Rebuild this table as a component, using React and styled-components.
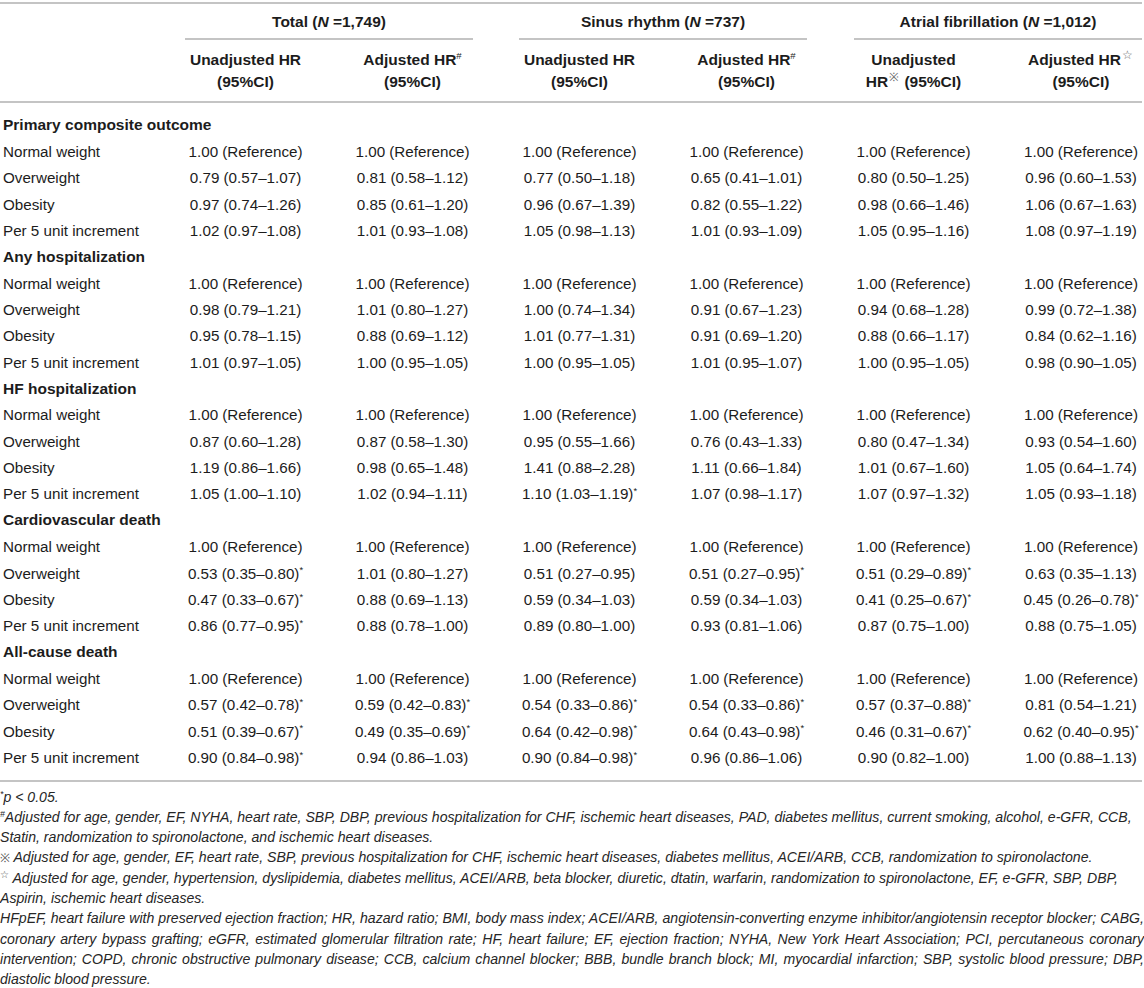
import React from 'react';
import styled, { createGlobalStyle } from 'styled-components';

const GlobalStyle = createGlobalStyle`
  body {
    margin: 0;
    background: #ffffff;
    color: #1c1c1c;
    font-family: "Liberation Sans", Arial, sans-serif;
  }
`;

const RULE = '#c4c4c4';
const COLS = '162px repeat(5, 167px) 145px';

const Page = styled.div`
  width: 1144px;
  height: 988px;
  overflow: hidden;
  padding-top: 2px;
  box-sizing: border-box;
`;

const Table = styled.div`
  width: 1142px;
  border-top: 2px solid ${RULE};
  border-bottom: 2px solid ${RULE};
  font-size: 15.2px;
`;

const Row = styled.div`
  display: grid;
  grid-template-columns: ${COLS};
  align-items: center;
`;

const GroupRow = styled(Row)`
  height: 36px;
  align-items: stretch;
`;

const GroupCell = styled.div`
  grid-column: ${({ $start }) => `${$start} / span 2`};
  display: flex;
  padding: ${({ $last }) => ($last ? '0 0 0 24px' : '0 23px')};
`;

const GroupLabel = styled.div`
  flex: 1;
  display: flex;
  align-items: center;
  justify-content: center;
  font-weight: bold;
  font-size: 15.5px;
  border-bottom: 2px solid ${RULE};
  padding-top: 1px;
  white-space: pre;
`;

const SubRow = styled(Row)`
  height: 61px;
  border-bottom: 2px solid ${RULE};
`;

const SubHead = styled.div`
  text-align: center;
  font-weight: bold;
  font-size: 15.5px;
  line-height: 22px;
  white-space: nowrap;
  padding-left: ${({ $edge }) => ($edge ? '23px' : '0')};
`;

const Body = styled.div`
  padding: 9px 0 9px;
`;

const BodyRow = styled(Row)`
  height: 26.35px;
`;

const SectionLabel = styled.div`
  grid-column: 1 / -1;
  padding-left: 3px;
  font-weight: bold;
  font-size: 15.5px;
`;

const RowLabel = styled.div`
  padding-left: 3px;
  white-space: nowrap;
`;

const Value = styled.div`
  text-align: center;
  white-space: nowrap;
  padding-left: ${({ $edge }) => ($edge ? '23px' : '0')};
`;

const Sup = styled.span`
  font-size: 0.62em;
  font-weight: normal;
  line-height: 0;
  position: relative;
  top: -0.55em;
`;

const Symbol = styled.span`
  font-size: 0.75em;
  font-weight: normal;
  line-height: 0;
  color: #6a6a6a;
  margin: 0 1px;
  position: relative;
  top: -0.45em;
`;

const Notes = styled.div`
  margin-top: 5px;
  font-size: 14.1px;
  line-height: 20.3px;
  font-style: italic;
  color: #262626;
`;

const Note = styled.p`
  margin: 0;
  text-align: ${({ $justify }) => ($justify ? 'justify' : 'left')};
  word-spacing: ${({ $justify }) => ($justify ? '-0.6px' : '0')};
`;

const Mark = styled.span`
  font-style: normal;
  font-size: ${({ $raise }) => ($raise ? '0.7em' : '0.85em')};
  line-height: 0;
  color: #555;
  position: relative;
  top: ${({ $raise }) => ($raise ? '-0.5em' : '0')};
`;

const REF = '1.00 (Reference)';

const sections = [
  {
    title: 'Primary composite outcome',
    rows: [
      ['Overweight', ['0.79 (0.57–1.07)', '0.81 (0.58–1.12)', '0.77 (0.50–1.18)', '0.65 (0.41–1.01)', '0.80 (0.50–1.25)', '0.96 (0.60–1.53)']],
      ['Obesity', ['0.97 (0.74–1.26)', '0.85 (0.61–1.20)', '0.96 (0.67–1.39)', '0.82 (0.55–1.22)', '0.98 (0.66–1.46)', '1.06 (0.67–1.63)']],
      ['Per 5 unit increment', ['1.02 (0.97–1.08)', '1.01 (0.93–1.08)', '1.05 (0.98–1.13)', '1.01 (0.93–1.09)', '1.05 (0.95–1.16)', '1.08 (0.97–1.19)']],
    ],
  },
  {
    title: 'Any hospitalization',
    rows: [
      ['Overweight', ['0.98 (0.79–1.21)', '1.01 (0.80–1.27)', '1.00 (0.74–1.34)', '0.91 (0.67–1.23)', '0.94 (0.68–1.28)', '0.99 (0.72–1.38)']],
      ['Obesity', ['0.95 (0.78–1.15)', '0.88 (0.69–1.12)', '1.01 (0.77–1.31)', '0.91 (0.69–1.20)', '0.88 (0.66–1.17)', '0.84 (0.62–1.16)']],
      ['Per 5 unit increment', ['1.01 (0.97–1.05)', '1.00 (0.95–1.05)', '1.00 (0.95–1.05)', '1.01 (0.95–1.07)', '1.00 (0.95–1.05)', '0.98 (0.90–1.05)']],
    ],
  },
  {
    title: 'HF hospitalization',
    rows: [
      ['Overweight', ['0.87 (0.60–1.28)', '0.87 (0.58–1.30)', '0.95 (0.55–1.66)', '0.76 (0.43–1.33)', '0.80 (0.47–1.34)', '0.93 (0.54–1.60)']],
      ['Obesity', ['1.19 (0.86–1.66)', '0.98 (0.65–1.48)', '1.41 (0.88–2.28)', '1.11 (0.66–1.84)', '1.01 (0.67–1.60)', '1.05 (0.64–1.74)']],
      ['Per 5 unit increment', ['1.05 (1.00–1.10)', '1.02 (0.94–1.11)', '1.10 (1.03–1.19)*', '1.07 (0.98–1.17)', '1.07 (0.97–1.32)', '1.05 (0.93–1.18)']],
    ],
  },
  {
    title: 'Cardiovascular death',
    rows: [
      ['Overweight', ['0.53 (0.35–0.80)*', '1.01 (0.80–1.27)', '0.51 (0.27–0.95)', '0.51 (0.27–0.95)*', '0.51 (0.29–0.89)*', '0.63 (0.35–1.13)']],
      ['Obesity', ['0.47 (0.33–0.67)*', '0.88 (0.69–1.13)', '0.59 (0.34–1.03)', '0.59 (0.34–1.03)', '0.41 (0.25–0.67)*', '0.45 (0.26–0.78)*']],
      ['Per 5 unit increment', ['0.86 (0.77–0.95)*', '0.88 (0.78–1.00)', '0.89 (0.80–1.00)', '0.93 (0.81–1.06)', '0.87 (0.75–1.00)', '0.88 (0.75–1.05)']],
    ],
  },
  {
    title: 'All-cause death',
    rows: [
      ['Overweight', ['0.57 (0.42–0.78)*', '0.59 (0.42–0.83)*', '0.54 (0.33–0.86)*', '0.54 (0.33–0.86)*', '0.57 (0.37–0.88)*', '0.81 (0.54–1.21)']],
      ['Obesity', ['0.51 (0.39–0.67)*', '0.49 (0.35–0.69)*', '0.64 (0.42–0.98)*', '0.64 (0.43–0.98)*', '0.46 (0.31–0.67)*', '0.62 (0.40–0.95)*']],
      ['Per 5 unit increment', ['0.90 (0.84–0.98)*', '0.94 (0.86–1.03)', '0.90 (0.84–0.98)*', '0.96 (0.86–1.06)', '0.90 (0.82–1.00)', '1.00 (0.88–1.13)']],
    ],
  },
];

function Cell({ text, edge }) {
  const starred = text.endsWith('*');
  return (
    <Value $edge={edge}>
      {starred ? text.slice(0, -1) : text}
      {starred && <Sup>*</Sup>}
    </Value>
  );
}

function DataRow({ label, values }) {
  return (
    <BodyRow>
      <RowLabel>{label}</RowLabel>
      {values.map((v, i) => (
        <Cell key={i} text={v} edge={i === 5} />
      ))}
    </BodyRow>
  );
}

export default function App() {
  return (
    <Page>
      <GlobalStyle />
      <Table>
        <GroupRow>
          <GroupCell $start={2}>
            <GroupLabel>Total (<i>N</i> =1,749)</GroupLabel>
          </GroupCell>
          <GroupCell $start={4}>
            <GroupLabel>Sinus rhythm (<i>N</i> =737)</GroupLabel>
          </GroupCell>
          <GroupCell $start={6} $last>
            <GroupLabel>Atrial fibrillation (<i>N</i> =1,012)</GroupLabel>
          </GroupCell>
        </GroupRow>
        <SubRow>
          <div />
          <SubHead>Unadjusted HR<br />(95%CI)</SubHead>
          <SubHead>Adjusted HR<Sup>#</Sup><br />(95%CI)</SubHead>
          <SubHead>Unadjusted HR<br />(95%CI)</SubHead>
          <SubHead>Adjusted HR<Sup>#</Sup><br />(95%CI)</SubHead>
          <SubHead>Unadjusted<br />HR<Symbol>※</Symbol> (95%CI)</SubHead>
          <SubHead $edge>Adjusted HR<Symbol>☆</Symbol><br />(95%CI)</SubHead>
        </SubRow>
        <Body>
          {sections.map((s) => (
            <React.Fragment key={s.title}>
              <BodyRow>
                <SectionLabel>{s.title}</SectionLabel>
              </BodyRow>
              <DataRow label="Normal weight" values={[REF, REF, REF, REF, REF, REF]} />
              {s.rows.map(([label, values]) => (
                <DataRow key={label} label={label} values={values} />
              ))}
            </React.Fragment>
          ))}
        </Body>
      </Table>
      <Notes>
        <Note><Sup>*</Sup>p &lt; 0.05.</Note>
        <Note>
          <Sup>#</Sup>Adjusted for age, gender, EF, NYHA, heart rate, SBP, DBP, previous hospitalization for CHF, ischemic heart diseases, PAD, diabetes mellitus, current smoking, alcohol, e-GFR, CCB, Statin, randomization to spironolactone, and ischemic heart diseases.
        </Note>
        <Note>
          <Mark>※</Mark> Adjusted for age, gender, EF, heart rate, SBP, previous hospitalization for CHF, ischemic heart diseases, diabetes mellitus, ACEI/ARB, CCB, randomization to spironolactone.
        </Note>
        <Note>
          <Mark $raise>☆</Mark> Adjusted for age, gender, hypertension, dyslipidemia, diabetes mellitus, ACEI/ARB, beta blocker, diuretic, dtatin, warfarin, randomization to spironolactone, EF, e-GFR, SBP, DBP, Aspirin, ischemic heart diseases.
        </Note>
        <Note $justify>
          HFpEF, heart failure with preserved ejection fraction; HR, hazard ratio; BMI, body mass index; ACEI/ARB, angiotensin-converting enzyme inhibitor/angiotensin receptor blocker; CABG, coronary artery bypass grafting; eGFR, estimated glomerular filtration rate; HF, heart failure; EF, ejection fraction; NYHA, New York Heart Association; PCI, percutaneous coronary intervention; COPD, chronic obstructive pulmonary disease; CCB, calcium channel blocker; BBB, bundle branch block; MI, myocardial infarction; SBP, systolic blood pressure; DBP, diastolic blood pressure.
        </Note>
      </Notes>
    </Page>
  );
}
